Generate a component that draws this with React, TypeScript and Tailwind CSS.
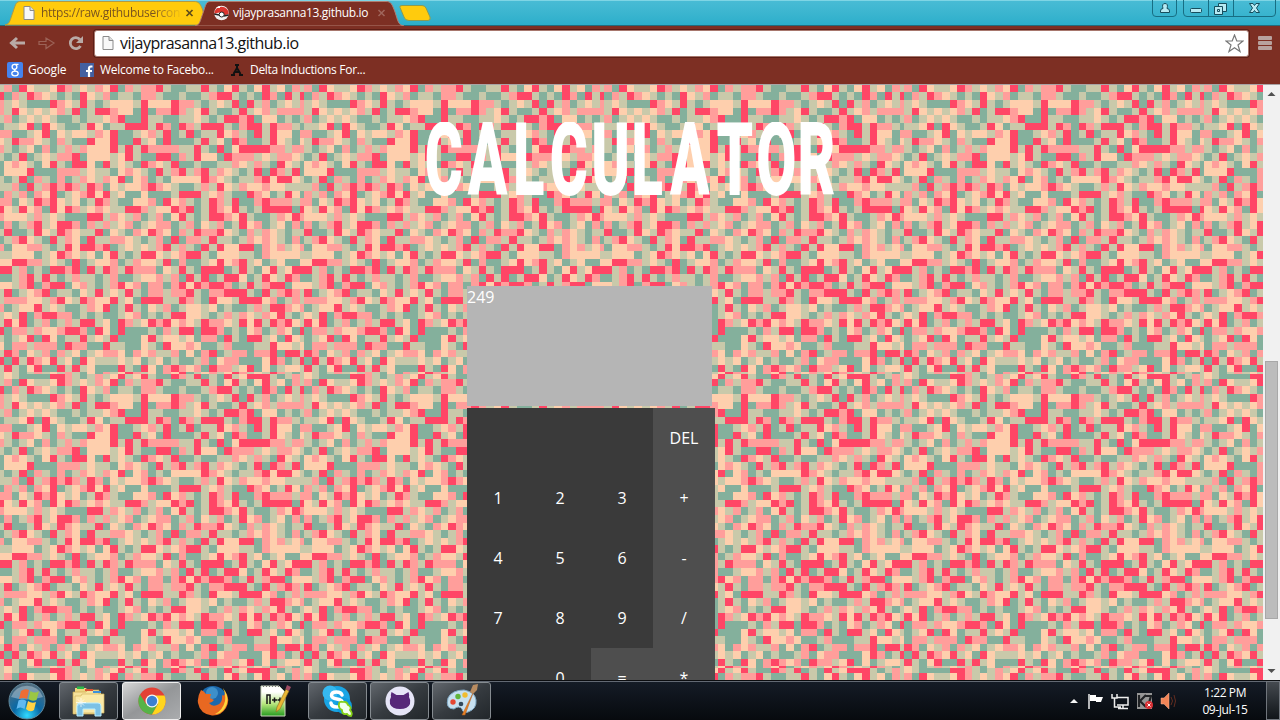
import React from "react";

const COLORS: Record<string, string> = {
  P: "#fecfad",
  K: "#ff9e9b",
  R: "#ff4666",
  G: "#84b09c",
  L: "#c9c9aa",
};

const MOSAIC = [
  "LPLGGGGRRKLGLKLPRLPRLGGRKLRGLGRLPRRRLGLK",
  "LKGRPLLPRKLPLKPRGKLKKRLGGLLRLGPRLGPRLPGK",
  "RGKLRKPLGLGRPLKGLLGKKLGGLGGLKRRLGLGRKGRL",
  "KLPLGGGRKPLRLGLPPPLRPPPRKKLGLPLRGRLKGLPL",
  "KLRPLPLPKLRGLRRKPPGRGKKRKLPRLGGLRLPKLKKK",
  "LKGLPLPLGGLGLLPKRGGRLLGGLLPLGLRRKRGPPGLG",
  "GLLPRGRPLGGLRPGLLRRRLRKGRKLRRRLGKRRLRKKL",
  "KKGGLPRGPLPPLKPRGGLPKLRGLRGLLRPKLGRLRPPG",
  "PLRKKPLGKLGGRPPRGGRLPGRGGGLRLPGRKGGLRPLG",
  "KLGLPGKGLKLKPPPRLRLRKKKKLLRLGRGPRRRRKKLK",
  "LGLRGLPLKKRGPPPLPRLGGRRGKLRPPGRKKKLPLKKP",
  "GPKPLGPRLGRRPGRLPLGRKPLRGGLGGLLKPLKLGRPL",
  "GPPPRGGGKKKLPLLGPKPLGRLKRLKRLKPLGLRGRKLR",
  "LGLRGKLGKGLKPLKPRGPKGLGPPPPRKPLGLLKRPRRP",
  "LLKGRLKRKRKLRKGPLPPKRKPLGGLKLRPLKPPKPPLL",
  "GKLKGKPRGLPKRPRLPGGPGGGLRRRLPKLGGRKPGLRP",
  "KKGPLRKRPLPGLRKLGGPPKGRPKLGLRKLRGGKRKKKL",
  "RPLRPKGRPRKLPKPLLRRKLPPRKRGLRKPRLGLRRRRG",
  "KPPPLKLPLGGGRRLKPLKGLKGPRLGLRRKPRLGGLKPR",
  "GKGLKRLPRRKGKLKLPKGLPKKGLKGPLKGLRPKGLPGK",
  "LRGGLRPLRKPLLRGPLGKPRKPGKLRKKRPLGKLKPLGL",
  "GLKRPLGRLKPGRLLKKPLGLKGRGKKLRLLGLKPKPLGK",
  "KGPPKKLGLRPRRKRGLPLPLKRLKLGRLRPPRRGKPKLP",
  "LLPPPGLPRKPLPGPRLGLRRPLPKRRLGPPPLLGKPPPP",
  "PPRRKKLPLGRGLPPKGLKPPLRGKGGLPRPKRLPGLPGG",
  "RRLKGLGRRKRGRLRKLRKKKGPLRLGRRRGLRLGPRLPR",
  "GGLKRLRLGLKLLGLKGGLPPKLKGRLRGLRRPGLRPLRK",
  "PPLKRGKRRGPKLGLKRPKGKKGKRPRKRRKGLRLKRRGP",
  "LRGLPKRGLLGPLRLPLRLGKKLKKRLGKKRRRLGRLKRK",
  "LKKKPPLKRPLRKPPRLPGRRRLLRKLGRPPLRRRPKGLK",
  "KGLPPRLPLGGLKPRGLRLGPLKGLPPLPGLGGLKLRRKP",
  "LPLRGKRRKKGLGLGGLPKGLGLRRPPLGLKLKPLKPRLG",
  "LRPRGLKGLKLRRLPGRKLPRKRPKPLRKKPLRPRLRKRP",
  "RGKKLKPPKRRKGRPGRGGGLGKLRRGRRKGLGPKGLKPG",
  "LGLPRGRPGLLRLPLRGGGPRLPPLPGKKGRLGRRLPGRP",
  "PGKKLKKKGRKKGGRLLGGPLGRPPKPGGLKGGGLLRPPL",
  "LRKGPLKGKLPGLPKKPGKPKLLKGPGKRGLKKGKKRGRR",
  "RGRLRKPRLPGRPLLLPLPGLPGLGGLKGPKKGGGPRKGL",
  "LRLGPRGGRLRLPGGGRLGRPGKRKPKGRKKLPRGPGLPP",
  "LPLGLKLPLKLGPGKLPRKLPGKPRGLPKLPRKLPLRKLG",
];

const colX = (c: number) => (c === 0 ? 0 : 4 + (c - 1) * 7.59);
const rowY = (r: number) => (r === 0 ? 0 : 4.8 + (r - 1) * 7.57);

function Mosaic() {
  const rects: React.ReactNode[] = [];
  MOSAIC.forEach((row, r) => {
    for (let c = 0; c < 40; c++) {
      rects.push(
        <rect key={r + "-" + c} x={colX(c)} y={rowY(r)} width={c === 0 ? 4.1 : 7.7} height={r === 0 ? 4.9 : 7.7} fill={COLORS[row[c] || "P"]} />
      );
    }
  });
  return (
    <svg className="absolute inset-0" width="1263" height="595" shapeRendering="crispEdges">
      <defs>
        <pattern id="mosaic" width="300" height="294" y="-5" patternUnits="userSpaceOnUse">{rects}</pattern>
      </defs>
      <rect width="1263" height="595" fill="url(#mosaic)" />
    </svg>
  );
}

const Doc = () => (
  <svg width="12" height="14" viewBox="0 0 12 14" className="shrink-0">
    <path d="M1 .5h6l4 4v9H1z" fill="#f8f8f8" stroke="#8b8b8b" />
    <path d="M7 .5v4h4" fill="#ddd" stroke="#8b8b8b" />
  </svg>
);

function TabStrip() {
  return (
    <div className="relative h-[26px] bg-linear-to-b from-[#49bcd5] to-[#2aaeca]">
      <svg className="absolute inset-0" width="1280" height="26">
        <path d="M0 .5H1280" stroke="#7ed5e5" />
        <path d="M0 25.5H1280" stroke="#236c7d" />
        <path d="M5 25C10 24 10 20 13 12C16 3 16 1.500 21 1.500H194C199 1.500 200 4 202 8L207 25Z" fill="#ffcb0d" stroke="#b29b43" />
        <path d="M195 26C200 25 200 21 203 13C206 4 206 1.500 211 1.500H386C391 1.500 392 4 395 12C398 21 398 25 404 26Z" fill="#7d2f23" stroke="#b07d70" />
        <path d="M400 7.500Q399 5.500 402 5.500H422Q425 5.500 426 8L430 17Q431 20.500 428 20.500H409Q405 20.500 404 17Z" fill="#ffcb0d" stroke="#8c9b52" />
        <g fill="none" stroke="#176e83">
          <path d="M1152.500 0V13Q1152.500 16.500 1156 16.500H1173Q1176.500 16.500 1176.500 13V0M1183.500 0V13Q1183.500 16.500 1187 16.500H1272Q1275.500 16.500 1275.500 13V0M1208.500 0V16M1233.500 0V16" />
        </g>
        <g fill="#b7eaf3" stroke="#174d5c">
          <path d="M1160.500 12.500V11Q1160.500 8.500 1163 8.500Q1161.500 3.500 1165 3.500T1167 8.500Q1169.500 8.500 1169.500 11V12.500Z" />
          <rect x="1190.500" y="8.500" width="11" height="4" rx="1" />
          <path d="M1218.500 3.500h8v8h-8z" />
          <path d="M1214.500 6.500h8v8h-8z" /><path d="M1217.500 9.500h2v2h-2z" />
          <path d="M1249.500 3.500H1253L1254.500 5.500L1256 3.500H1259.500L1256.500 8L1259.500 12.500H1256L1254.500 10.500L1253 12.500H1249.500L1252.500 8Z" />
        </g>
        <path d="M186.500 10L192.500 16M192.500 10L186.500 16" stroke="#5e4c1b" strokeWidth="1.700" />
        <path d="M378.500 10L384.500 16M384.500 10L378.500 16" stroke="#a0665c" strokeWidth="1.500" />
        <circle cx="221.500" cy="13" r="7.300" fill="#f1f1f1" />
        <path d="M214.200 14A7.300 7.300 0 0 1 228.800 14L224 15.500Q221 11 217 13Z" fill="#dc352f" />
        <path d="M214.200 14Q217 14.500 219 15M224 16L228.500 15" stroke="#222" strokeWidth="1.300" />
        <circle cx="221.700" cy="14.500" r="2.500" fill="#fff" stroke="#222" />
        <path d="M216 8q2-2 4-2v2z" fill="#fff" />
      </svg>
      <div className="relative flex h-[26px] items-center pl-[23px] text-[12px]">
        <Doc />
        <div className="ml-[6px] w-[139px] whitespace-nowrap bg-linear-to-r from-[#76501f] from-80% to-[#f2c00f] bg-clip-text text-transparent tracking-[-0.27px]">https://raw.githubusercon</div>
        <div className="ml-[53px] whitespace-nowrap text-white tracking-[-0.34px]">vijayprasanna13.github.io</div>
      </div>
    </div>
  );
}

function Toolbar() {
  return (
    <div className="flex h-[34px] items-center bg-[#7d2f23] pl-[7px]">
      <svg width="78" height="20" viewBox="0 0 78 20" fill="none">
        <path d="M18 10H5M10 5L4.500 10L10 15" stroke="#b9aaa6" strokeWidth="3" />
        <path d="M32 8.500H39V5L47 10L39 15.500V11.500H32Z" stroke="#9c6257" strokeWidth="1.200" />
        <path d="M73 6.500A5.500 5.500 0 1 0 73.500 13" stroke="#b9aaa6" strokeWidth="2.800" /><path d="M76 3V10H69Z" fill="#b9aaa6" />
      </svg>
      <div className="ml-[9px] flex h-[27px] w-[1155px] items-center rounded-[3px] border border-[#a8786e] bg-white pl-[7px] shadow-[0_0_0_1px_#5c1e16]">
        <Doc />
        <span className="ml-[6px] text-[16px] leading-[22px] tracking-[-0.51px] text-[#111]">vijayprasanna13.github.io</span>
        <svg className="ml-auto mr-[4px]" width="19" height="19" viewBox="0 0 19 19"><path d="M9.500 1L11.800 7H18L13 11L15 17.500L9.500 13.700L4 17.500L6 11L1 7H7.200Z" fill="#fff" stroke="#777" strokeWidth="1.200" /></svg>
      </div>
      <div className="ml-[9px] flex flex-col gap-[1px]">
        {[0, 1, 2].map((i) => <div key={i} className="h-[4px] w-[14px] rounded-[1px] bg-[#b8a29e]" />)}
      </div>
    </div>
  );
}

function Bookmarks() {
  return (
    <div className="relative flex h-[25px] items-center border-b border-[#a9a4a6] bg-[#7d2f23] pb-[4px] pl-[7px] text-[12px] text-white">
      <svg width="16" height="16" viewBox="0 0 16 16">
        <rect width="16" height="16" rx="2" fill="#4583ef" />
        <g fill="none" stroke="#fff" strokeWidth="1.300"><ellipse cx="7.500" cy="4.800" rx="2.400" ry="2.500" /><path d="M7.500 2.300H11.500M8.500 7Q6.500 8 8.500 9.200" /><ellipse cx="8" cy="11.500" rx="3.200" ry="2.300" /></g>
      </svg>
      <span className="ml-[5px] w-[52px] tracking-[-0.2px]">Google</span>
      <svg width="14" height="14" viewBox="0 0 14 14">
        <rect width="14" height="14" fill="#4460a0" /><path d="M12.500 3.500H11Q9 3.500 9 5.500V14M6 8H12" fill="none" stroke="#fff" strokeWidth="2.200" />
      </svg>
      <span className="ml-[6px] w-[130px] whitespace-nowrap tracking-[-0.25px]">Welcome to Facebo...</span>
      <svg width="14" height="14" viewBox="0 0 14 14" fill="none" stroke="#111" strokeWidth="2"><path d="M5 2H9M7 2V5L3.500 11M7 5L10.500 11M4 9H10M1 12H5M9 12H13" /></svg>
      <span className="ml-[6px] whitespace-nowrap tracking-[-0.3px]">Delta Inductions For...</span>
    </div>
  );
}

const KEYS = ["", "", "", "DEL", "1", "2", "3", "+", "4", "5", "6", "-", "7", "8", "9", "/", "", "0", "=", "*"];

function Page() {
  return (
    <div className="relative h-[595px] w-[1263px] overflow-hidden">
      <Mosaic />
      <div className="relative pt-[37px]">
        <svg className="ml-[420px] block" width="424" height="80">
          <text transform="translate(0 73) scale(.57 1)" x="8.300 84 163.300 227.600 300.300 371 438.500 520 590 662.400" y="0" fill="#fff" fontFamily="Roboto" fontWeight="900" fontSize="102">CALCULATOR</text>
        </svg>
        <div className="ml-[467px] mt-[84px] h-[120px] w-[245px] bg-[#b5b5b5] text-[16px] leading-[22px] text-white">249</div>
        <div className="ml-[467px] mt-[2px] grid w-[248px] grid-cols-4 text-center text-[16px] leading-[60px] text-white">
          {KEYS.map((k, i) => <div key={i} className={i % 4 === 3 || i === 18 ? "h-[60px] bg-[#4e4e4e]" : "h-[60px] bg-[#3a3a3a]"}>{k}</div>)}
        </div>
      </div>
    </div>
  );
}

function Scrollbar() {
  return (
    <div className="flex w-[17px] flex-col items-center bg-[#f1f1f1]">
      <svg width="17" height="276"><path d="M4.500 11L8.500 7L12.500 11Z" fill="#505050" /></svg>
      <div className="h-[258px] w-[13px] border border-[#a8a8a8] bg-[#bcbcbc]" />
      <svg className="mt-auto" width="17" height="17"><path d="M4.500 6L8.500 10L12.500 6Z" fill="#505050" /></svg>
    </div>
  );
}

const Start = () => (
  <svg width="38" height="38" viewBox="0 0 38 38">
    <defs><radialGradient id="orb" cx=".5" cy=".9" r=".85"><stop stopColor="#31d9ff" /><stop offset=".45" stopColor="#0969a6" /><stop offset="1" stopColor="#506d80" /></radialGradient></defs>
    <circle cx="19" cy="19" r="18" fill="url(#orb)" stroke="#61889b" /><path d="M3 15A17 17 0 0 1 35 15Q19 20 3 15Z" fill="#fff" opacity=".32" />
    <path d="M13 9Q17 6 21 8L19 17Q15 15 11 17Z" fill="#ee6d35" /><path d="M22.500 9Q27 12 31 9L28.500 18Q24 20 20.500 17Z" fill="#9bc744" /><path d="M10.500 18.500Q14 16.500 18.500 19L16.500 27Q12 24 8.500 27Z" fill="#62b9f0" /><path d="M20 19Q24 22 28 20L26 28Q22 31 18 27Z" fill="#ffd244" />
  </svg>
);
const Folder = () => (
  <svg width="34" height="32" viewBox="0 0 34 32">
    <path d="M3 3H14L16 6H29V28H3Z" fill="#eed580" /><path d="M5 1.500H12V4H5Z" fill="#2ebb4b" /><path d="M1 7H14L16 5H27V29H1Z" fill="#f6e29b" stroke="#caa84c" strokeWidth=".7" /><path d="M13 4H21V6H13Z" fill="#dc5135" /><path d="M21 6H29V8H21Z" fill="#3d91db" /><path d="M10 9H32V28H3V11H9Z" fill="#fae9a7" stroke="#d3b55f" strokeWidth=".7" />
    <path d="M5 31V21Q5 18 8 18H26Q29 18 29 21V31H23V24H11V31Z" fill="#7cc1e5" stroke="#bceeff" /><path d="M9 13V22M4 17.500H14M6 14.500L12 20.500M12 14.500L6 20.500" stroke="#fff" opacity=".7" />
  </svg>
);
const Chrome = () => (
  <svg width="28" height="28" viewBox="0 0 28 28">
    <circle cx="14" cy="14" r="13.500" fill="#e34135" /><path d="M2 7.500A13.500 13.500 0 0 0 14 27.500L20 17H8Z" fill="#56b348" /><path d="M14 27.500A13.500 13.500 0 0 0 26.500 8.500H14L20 17Z" fill="#ffd51d" /><circle cx="14" cy="14" r="6.500" fill="#f5f5f5" /><circle cx="14" cy="14" r="5.200" fill="#3c80d0" />
  </svg>
);
const Firefox = () => (
  <svg width="32" height="32" viewBox="0 0 32 32">
    <circle cx="16" cy="15" r="14" fill="#1c69ad" /><circle cx="15" cy="8" r="6" fill="#53aadd" opacity=".6" /><path d="M4 5Q7 6 9 9L14 9L13 13L17 15Q15 18 12 18Q15 22 20 20Q26 18 25 10Q28 12 28 6Q34 14 29 23Q24 31 15 30.500Q3 29 1 18Q0 12 4 5Z" fill="#e86821" /><path d="M26 3Q34 14 28 23Q24 29 18 29Q26 25 28 16Q29 9 26 3Z" fill="#fed53a" />
  </svg>
);
const Notepad = () => (
  <svg width="32" height="34" viewBox="0 0 32 34">
    <defs><linearGradient id="np" x2="0" y2="1"><stop offset=".2" stopColor="#fff" /><stop offset=".6" stopColor="#b6e67c" /><stop offset="1" stopColor="#249a1e" /></linearGradient></defs>
    <path d="M2 2H20L26 8V32H2Z" fill="url(#np)" stroke="#ccd7bd" /><path d="M4 2H20" stroke="#777" strokeDasharray="1 2" strokeWidth="2" /><path d="M8 20V11H11V20M13 16H18M15.500 13.500V18.500M18.500 16H23.500M21 13.500V18.500" fill="none" stroke="#171717" strokeWidth="1.500" /><path d="M27 5L30 7L21 25L17 28L18 23Z" fill="#e9b735" stroke="#8d6a20" strokeWidth=".6" /><path d="M28 1L32 3L30 7L26.500 5Z" fill="#a14d64" />
  </svg>
);
const Skype = () => (
  <svg width="32" height="32" viewBox="0 0 32 32">
    <circle cx="15" cy="14" r="13" fill="#19a5e5" /><circle cx="8" cy="8" r="7.500" fill="#36b9f0" /><circle cx="22" cy="21" r="8" fill="#109add" /><path d="M20 10Q19 7 14.500 7Q9.500 7 9.500 10.500Q9.500 13 15 14Q20.500 15 20.500 18Q20.500 22 15 22Q9.500 22 9 18" stroke="#fff" strokeWidth="3.500" fill="none" strokeLinecap="round" /><path d="M17 19Q17 16 21 17Q25 16 26 20Q30 22 28 25Q31 28 29 31Q26 31 25 29Q20 30 20 25Q16 23 17 19Z" fill="#f4ffed" stroke="#84cf17" strokeWidth="1.800" />
  </svg>
);
const Git = () => (
  <svg width="30" height="30" viewBox="0 0 30 30"><circle cx="15" cy="15" r="14.500" fill="#e6e5f7" /><path d="M6.500 6L11.500 9H18.500L23.500 6Q24.500 9 24 11Q26 14 25 18Q23 23 15 23Q7 23 5 18Q4 14 6 11Q5.500 9 6.500 6Z" fill="#572879" /></svg>
);
const Paint = () => (
  <svg width="34" height="34" viewBox="0 0 34 34">
    <path d="M3 14Q7 6 19 6Q30 8 31 16Q32 25 23 28Q18 30 17 25Q14 21 9 25Q0 25 3 14Z" fill="#c7e0f0" stroke="#80a9c5" /><circle cx="8" cy="18" r="2.700" fill="#e44632" /><circle cx="13" cy="12.500" r="2.700" fill="#61b53b" /><circle cx="20" cy="11" r="2.700" fill="#f0bc31" /><circle cx="16" cy="20" r="2.300" fill="#31485b" /><path d="M28 9L20 31L17 31Z" fill="#e98226" stroke="#a9581d" strokeWidth=".5" /><path d="M25 8L28 1L33 0L32 6L28 10Z" fill="#b88b60" />
  </svg>
);

const box = "flex h-[38px] w-[59px] items-center justify-center rounded-[3px] border border-[#858b90] ";
const dark = "bg-linear-to-br from-[#62676d] via-[#363b40] to-[#22272b]";

function Taskbar() {
  return (
    <div className="relative flex h-[40px] items-center border-t border-[#0b0d10] bg-linear-to-b from-[#151c27] to-[#070a0e] shadow-[inset_0_1px_#626973]">
      <div className="ml-[8px] w-[51px]"><Start /></div>
      <div className={box + dark}><Folder /></div>
      <div className={box + "ml-[4px] border-[#eeeeee] bg-linear-to-br from-[#d7d7d7] via-[#949698] to-[#aaacae]"}><Chrome /></div>
      <div className="ml-[16px] w-[47px]"><Firefox /></div>
      <div className="ml-[15px] w-[49px]"><Notepad /></div>
      <div className={box + dark}><Skype /></div>
      <div className={box + dark + " ml-[3px]"}><Git /></div>
      <div className={box + dark + " ml-[3px]"}><Paint /></div>
      <svg className="ml-auto" width="112" height="24" viewBox="0 0 112 24" fill="none">
        <path d="M1 14L5 10L9 14Z" fill="#f4f4f4" />
        <path d="M20 5V20" stroke="#eee" strokeWidth="1.500" /><path d="M21 6H27V8H34L32 13H27V12H21Z" fill="#fff" />
        <path d="M48.500 8.500H59V16H48M43 5V9H48V5M45.500 9V18H52M54 16V19M49 19.500H59" stroke="#eee" strokeWidth="1.500" />
        <rect x="68" y="4" width="15" height="16" fill="#969696" /><path d="M70 6V18M77 6L71 12L77 18M76 7H82L79 17" stroke="#202225" strokeWidth="2.200" /><circle cx="80" cy="16" r="4" fill="#d83035" /><path d="M78.500 14.500L81.500 17.500M81.500 14.500L78.500 17.500" stroke="#fff" />
        <path d="M92 9H95L100 4V20L95 15H92Z" fill="#f28557" stroke="#f7b394" strokeWidth=".5" /><path d="M102 8Q105 12 102 16M105 6Q108 12 105 18" stroke="#632d20" />
      </svg>
      <div className="ml-[18px] mr-[15px] flex w-[52px] flex-col items-center whitespace-nowrap text-[12px] leading-[17px] tracking-[-0.4px] text-white"><div>1:22 PM</div><div>09-Jul-15</div></div>
      <div className="h-[39px] w-[14px] border border-[#70757c] bg-linear-to-b from-[#454a50] to-[#111519]" />
    </div>
  );
}

export default function App() {
  return (
    <div className="h-[720px] w-[1280px] overflow-hidden bg-[#7d2f23] font-['Open_Sans','Noto_Sans',sans-serif]">
      <TabStrip />
      <Toolbar />
      <Bookmarks />
      <div className="flex h-[595px]">
        <Page />
        <Scrollbar />
      </div>
      <Taskbar />
    </div>
  );
}
